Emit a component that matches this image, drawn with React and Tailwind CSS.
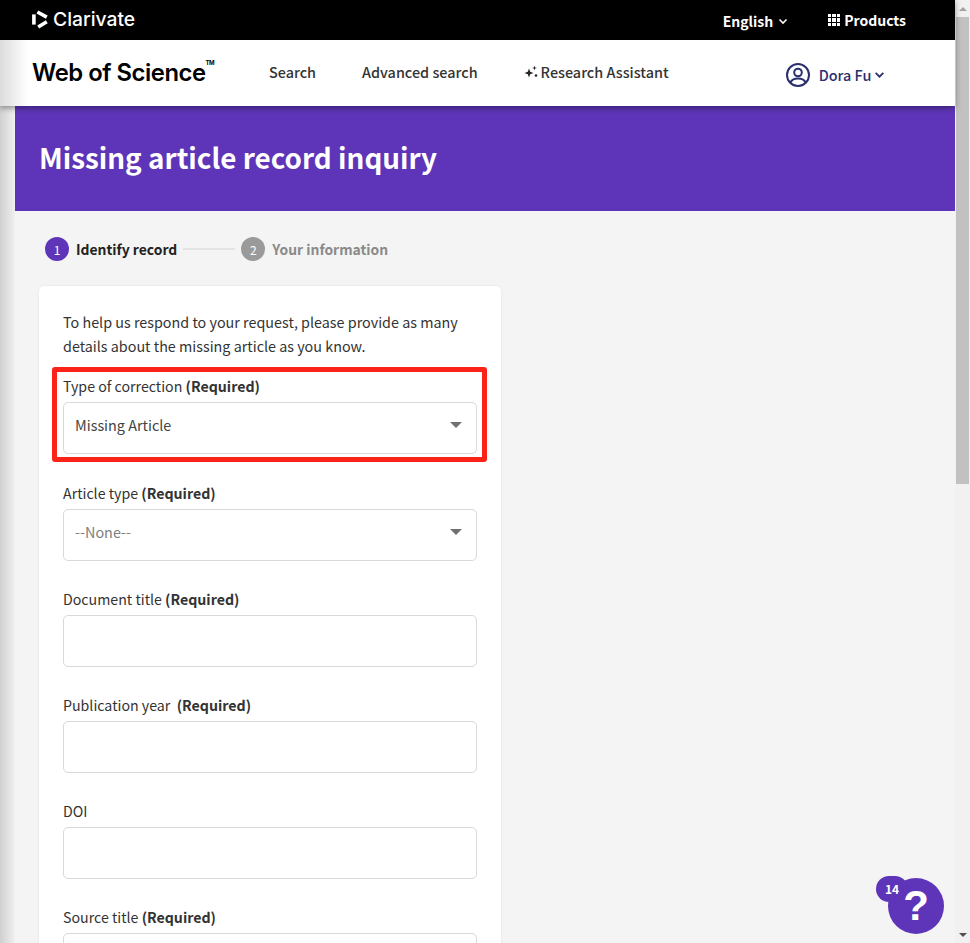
const font = "font-['Noto_Sans_CJK_SC','Noto_Sans',sans-serif]";

function ClarivateMark() {
  return (
    <svg width="17" height="19" viewBox="0 0 17 19" fill="none" stroke="#fff" strokeWidth="3.6">
      <path d="M1.9 4.4 L1.9 14.6" />
      <path d="M5.4 2 L14.8 7.2" />
      <path d="M14.8 11.8 L6.2 17" />
    </svg>
  );
}

function Chevron({ className, size = 10 }) {
  return (
    <svg width={size} height={size} viewBox="0 0 10 10" fill="none" stroke="currentColor" strokeWidth="1.6" className={className}>
      <path d="M1.5 3.5 L5 7 L8.5 3.5" />
    </svg>
  );
}

function Grid() {
  const cells = [];
  for (let i = 0; i < 9; i++) cells.push(<span key={i} className="bg-white" />);
  return <span className="grid h-[12px] w-[12px] grid-cols-3 gap-px">{cells}</span>;
}

function Sparkle() {
  return (
    <svg width="14" height="14" viewBox="0 0 14 14" fill="#262626">
      <path d="M5 3.5 L6.2 6.8 L9.5 8 L6.2 9.2 L5 12.5 L3.8 9.2 L0.5 8 L3.8 6.8 Z" />
      <path d="M10.5 0.5 L11.1 2.4 L13 3 L11.1 3.6 L10.5 5.5 L9.9 3.6 L8 3 L9.9 2.4 Z" />
      <circle cx="12" cy="10.5" r="1.3" />
    </svg>
  );
}

function UserIcon() {
  return (
    <svg width="24" height="24" viewBox="0 0 24 24" fill="none" stroke="#2a2f6e" strokeWidth="2">
      <circle cx="12" cy="12" r="11" />
      <circle cx="12" cy="9.5" r="3.8" />
      <path d="M4.5 19.5 C6 15.8 9 15.5 12 15.5 C15 15.5 18 15.8 19.5 19.5" />
    </svg>
  );
}

function Field({ label, required, select, value, muted }) {
  return (
    <div>
      <div className="mb-[3px] h-[26px] text-[14.2px] leading-[26px] text-[#333]">
        <span className="whitespace-pre">{label}</span>
        {required && <> <b className="font-bold">(Required)</b></>}
      </div>
      <div className={`flex h-[52px] items-center justify-between rounded-[5px] border border-[#d9d9d9] bg-white pb-[6px] pl-[11px] pr-[14px] text-[14.4px] ${muted ? "text-[#808080]" : "text-[#444]"}`}>
        <span>{value}</span>
        {select && <span className="h-0 w-0 border-x-[6px] border-t-[6px] border-x-transparent border-t-[#707070]" />}
      </div>
    </div>
  );
}

export default function App() {
  return (
    <div className={`${font} flex h-[943px] w-[970px] overflow-hidden bg-[#f4f4f4]`}>
      <div className="relative flex w-[955px] flex-col">
        <header className="relative z-10 shadow-[0_2px_6px_rgba(0,0,0,0.4)]">
          <div className="flex h-[40px] items-center justify-between bg-black pl-[32px] pr-[49px] text-white">
            <div className="flex items-center gap-[4px]">
              <ClarivateMark />
              <span className="font-['Inter',sans-serif] text-[19.3px] font-medium leading-none">Clarivate</span>
            </div>
            <div className="flex items-center text-[14px] font-bold">
              <span className="flex items-center gap-[5px] pt-[2px]">English <Chevron size={10} /></span>
              <span className="ml-[40px] flex items-center gap-[4px]"><Grid /> Products</span>
            </div>
          </div>
          <div className="relative flex h-[66px] items-center bg-white pb-[2px] pl-[32px] text-[14.4px] font-medium text-[#333]">
            <div className="absolute inset-y-0 left-0 w-[28px] bg-gradient-to-r from-[#dcdcdc] to-white" />
            <div className="relative mt-[2px] flex w-[237px] items-start font-['Inter',sans-serif] text-[23.8px] font-semibold leading-none tracking-[-0.45px] text-black">
              Web of Science<span className="mt-[-1px] text-[6px] font-bold">TM</span>
            </div>
            <span>Search</span>
            <span className="ml-[46px]">Advanced search</span>
            <span className="ml-[46px] flex items-center gap-[3px]"><Sparkle /> Research Assistant</span>
            <span className="ml-[117px] mt-[6px] flex items-center gap-[9px] text-[#2a2f6e]">
              <UserIcon />
              <span className="flex items-center gap-[3px]">Dora Fu <Chevron size={11} /></span>
            </span>
          </div>
        </header>

        <div className="flex min-h-0 flex-1">
          <div className="w-[15px] bg-gradient-to-r from-[#d0d0d0] to-[#f0f0f0]" />
          <main className="min-w-0 flex-1">
            <div className="flex h-[105px] items-center bg-[#5e35b8] pb-[2px] pl-[24px] text-[27.85px] font-bold text-white">
              Missing article record inquiry
            </div>
            <div className="flex h-[75px] items-center pl-[30px] text-[13.9px] font-bold">
              <span className="flex h-[24px] w-[24px] items-center justify-center rounded-full bg-[#5e35b8] pt-[2px] text-[12px] font-normal text-white">1</span>
              <span className="ml-[7px] pt-[2px] text-[#222]">Identify record</span>
              <span className="ml-[6px] h-[2px] w-[52px] bg-[#e3e3e3]" />
              <span className="ml-[6px] flex h-[24px] w-[24px] items-center justify-center rounded-full bg-[#9a9a9a] pt-[2px] text-[12px] font-normal text-white">2</span>
              <span className="ml-[7px] pt-[2px] text-[#8a8a8a]">Your information</span>
            </div>
            <div className="ml-[24px] w-[462px] rounded-[5px] bg-white px-[24px] pt-[24px] shadow-[0_0_3px_rgba(0,0,0,0.08)]">
              <p className="text-[14.35px] leading-[24px] text-[#333]">
                To help us respond to your request, please provide as many details about the missing article as you know.
              </p>
              <div className="relative mt-[15px]">
                <Field label="Type of correction" required select value="Missing Article" />
                <div className="absolute bottom-[-8px] left-[-11px] right-[-10px] top-[-6px] rounded-[3px] border-[5px] border-[#fb2317]" />
              </div>
              <div className="mt-[26px] flex flex-col gap-[25px]">
                <Field label="Article type" required select value="--None--" muted />
                <Field label="Document title" required />
                <Field label="Publication year " required />
                <Field label="DOI" />
                <Field label="Source title" required />
              </div>
            </div>
          </main>
        </div>

        <div className="absolute left-[888px] top-[878px] flex h-[56px] w-[56px] items-center justify-center rounded-full bg-[#5e35b8] font-['Liberation_Sans',sans-serif] text-[42px] font-bold leading-none text-white">?</div>
        <div className="absolute left-[876px] top-[876px] flex h-[26px] w-[32px] items-center justify-center rounded-full bg-[#5e35b8] text-[12px] font-bold text-white">14</div>
      </div>

      <div className="flex w-[15px] flex-col bg-[#f1f1f1]">
        <div className="flex h-[17px] items-center justify-center">
          <span className="h-0 w-0 border-x-[4px] border-b-[4px] border-x-transparent border-b-[#a3a3a3]" />
        </div>
        <div className="mx-[1px] h-[467px] bg-[#c1c1c1]" />
        <div className="flex-1" />
        <div className="flex h-[17px] items-center justify-center">
          <span className="h-0 w-0 border-x-[4px] border-t-[4px] border-x-transparent border-t-[#505050]" />
        </div>
      </div>
    </div>
  );
}
